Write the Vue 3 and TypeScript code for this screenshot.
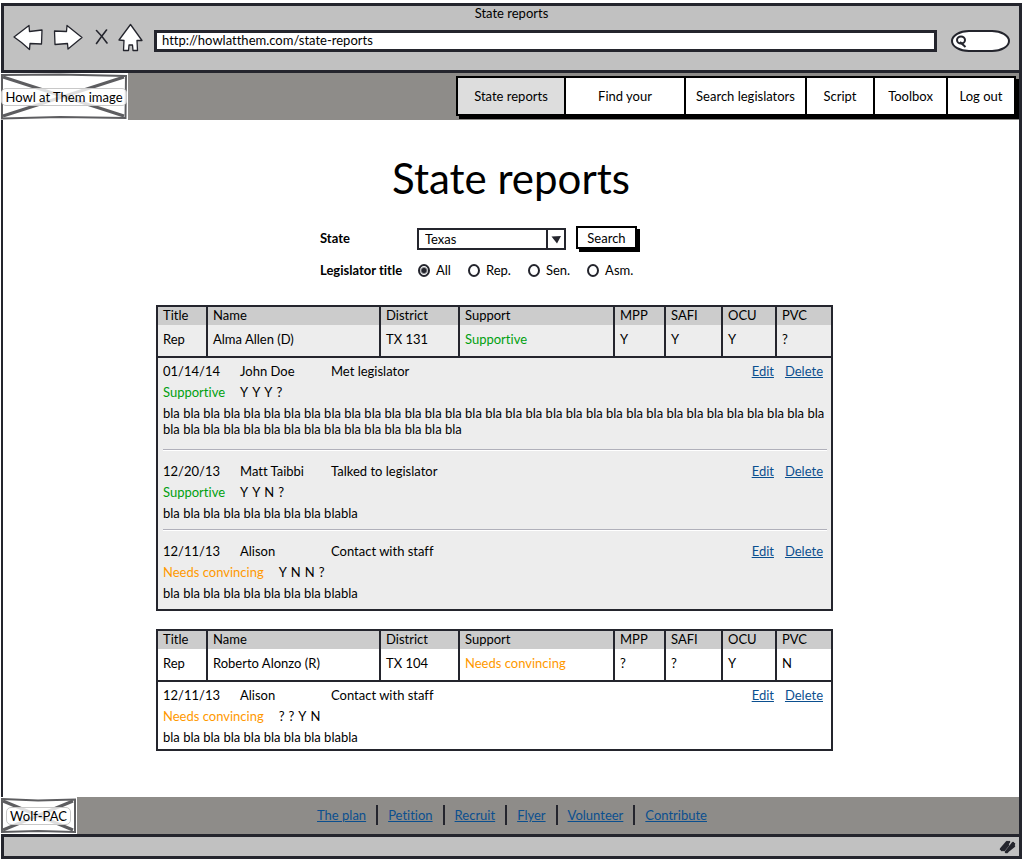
<script setup lang="ts">
import { ref } from 'vue'

type Stance = 'Supportive' | 'Needs convincing'

interface Entry {
  date: string
  author: string
  action: string
  stance: Stance
  answers: string[]
  note: string
}

interface Report {
  name: string
  district: string
  stance: Stance
  votes: string[]
  shaded: boolean
  entries: Entry[]
}

const navItems = [
  { label: 'State reports', size: 'w-state' },
  { label: 'Find your', size: 'w-find' },
  { label: 'Search legislators', size: 'w-search' },
  { label: 'Script', size: 'w-script' },
  { label: 'Toolbox', size: 'w-tool' },
  { label: 'Log out', size: 'w-log' },
]

const titles = ['All', 'Rep.', 'Sen.', 'Asm.']
const issues = ['MPP', 'SAFI', 'OCU', 'PVC']
const footerLinks = ['The plan', 'Petition', 'Recruit', 'Flyer', 'Volunteer', 'Contribute']

const bla = (n: number) => Array(n).fill('bla').join(' ')
const shortNote = bla(8) + ' blabla'

const reports: Report[] = [
  {
    name: 'Alma Allen (D)',
    district: 'TX 131',
    stance: 'Supportive',
    votes: ['Y', 'Y', 'Y', '?'],
    shaded: true,
    entries: [
      { date: '01/14/14', author: 'John Doe', action: 'Met legislator', stance: 'Supportive', answers: ['Y', 'Y', 'Y', '?'], note: bla(48) },
      { date: '12/20/13', author: 'Matt Taibbi', action: 'Talked to legislator', stance: 'Supportive', answers: ['Y', 'Y', 'N', '?'], note: shortNote },
      { date: '12/11/13', author: 'Alison', action: 'Contact with staff', stance: 'Needs convincing', answers: ['Y', 'N', 'N', '?'], note: shortNote },
    ],
  },
  {
    name: 'Roberto Alonzo (R)',
    district: 'TX 104',
    stance: 'Needs convincing',
    votes: ['?', '?', 'Y', 'N'],
    shaded: false,
    entries: [
      { date: '12/11/13', author: 'Alison', action: 'Contact with staff', stance: 'Needs convincing', answers: ['?', '?', 'Y', 'N'], note: shortNote },
    ],
  },
]

const url = ref('http://howlatthem.com/state-reports')
const quick = ref('')
const state = ref('Texas')
const legislatorTitle = ref('All')

const stanceClass = (s: Stance) => (s === 'Supportive' ? 'good' : 'warn')
</script>

<template>
  <div class="window">
    <div class="chrome">
      <div class="window-title">State reports</div>
      <div class="toolbar">
        <button class="tool" aria-label="Back">
          <svg width="30" height="27" viewBox="0 0 30 27"><path d="M1 13 L16 1.5 L16.5 7.500 L29 6 L28.500 20 L17 19.500 L16.500 25.500 L8.500 18.500 Z" /></svg>
        </button>
        <button class="tool" aria-label="Forward">
          <svg width="30" height="27" viewBox="0 0 30 27"><path d="M1.500 7 L13.500 7.500 L14 1.500 L29 13.500 L15 25 L14.500 19.500 L2 20.500 Z" /></svg>
        </button>
        <button class="tool stop" aria-label="Stop">
          <svg width="13" height="16" viewBox="0 0 13 16"><path class="stroke" d="M1.500 1.500 Q7 7 12 14 M11.500 1 Q6 8 1.500 14.500" /></svg>
        </button>
        <button class="tool" aria-label="Home">
          <svg width="25" height="29" viewBox="0 0 25 29"><path d="M12.500 1.500 L24 17.500 L19 17.500 L19.500 27.500 L15 27.500 L14.500 22 L11 22 L10.500 27.500 L5.500 27.500 L6 17.500 L1 17 Z" /></svg>
        </button>
        <input v-model="url" class="address" type="text" aria-label="Address" />
        <label class="quick">
          <svg width="12" height="14" viewBox="0 0 12 14"><ellipse cx="6" cy="6" rx="4" ry="3.500" /><path d="M5 8 L10.500 13" /></svg>
          <input v-model="quick" type="text" aria-label="Quick search" />
        </label>
      </div>
    </div>

    <header class="site-header">
      <div class="placeholder logo">
        <svg viewBox="0 0 128 47" preserveAspectRatio="none" aria-hidden="true"><path d="M2 2 L60 1.500 L126 3 L125.500 45 L60 44 L2 45.500 Z" /><path class="cross" d="M3 4 L124 43 M124 4 L3 43" /></svg>
        <span>Howl at Them image</span>
      </div>
      <nav class="nav">
        <button v-for="(item, i) in navItems" :key="item.label" :class="[item.size, { active: i === 0 }]">{{ item.label }}</button>
      </nav>
    </header>

    <main class="content">
      <h1>State reports</h1>
      <div class="column">
        <form class="filters" @submit.prevent>
          <label class="caption" for="state">State</label>
          <div class="line">
            <div class="select">
              <select id="state" v-model="state">
                <option>Texas</option>
              </select>
              <svg width="18" height="18" viewBox="0 0 16 18" aria-hidden="true"><path d="M3.500 6.500 L13 6 L9 13.500 Z" /></svg>
            </div>
            <button class="search" type="submit">Search</button>
          </div>
          <span id="legislator-title" class="caption">Legislator title</span>
          <div class="radios" role="radiogroup" aria-labelledby="legislator-title">
            <label v-for="t in titles" :key="t">
              <input v-model="legislatorTitle" type="radio" name="legislator-title" :value="t" />{{ t }}
            </label>
          </div>
        </form>

        <section v-for="r in reports" :key="r.name" class="report" :class="{ shaded: r.shaded }">
          <table>
            <colgroup>
              <col class="c-title" /><col class="c-name" /><col class="c-district" /><col class="c-support" />
              <col class="c-mpp" /><col class="c-safi" /><col class="c-ocu" /><col class="c-pvc" />
            </colgroup>
            <thead>
              <tr>
                <th>Title</th><th>Name</th><th>District</th><th>Support</th>
                <th v-for="i in issues" :key="i">{{ i }}</th>
              </tr>
            </thead>
            <tbody>
              <tr>
                <td>Rep</td><td>{{ r.name }}</td><td>{{ r.district }}</td>
                <td :class="stanceClass(r.stance)">{{ r.stance }}</td>
                <td v-for="(v, i) in r.votes" :key="i">{{ v }}</td>
              </tr>
            </tbody>
          </table>
          <div class="entries">
            <article v-for="(e, i) in r.entries" :key="i" class="entry">
              <div class="meta">
                <span>{{ e.date }}</span><span>{{ e.author }}</span><span>{{ e.action }}</span>
                <span class="actions"><a href="#">Edit</a><a href="#">Delete</a></span>
              </div>
              <div class="verdict">
                <span :class="stanceClass(e.stance)">{{ e.stance }}</span>
                <span class="answers"><span v-for="(a, k) in e.answers" :key="k">{{ a }}</span></span>
              </div>
              <p>{{ e.note }}</p>
            </article>
          </div>
        </section>
      </div>
    </main>

    <footer class="site-footer">
      <div class="placeholder sponsor">
        <svg viewBox="0 0 77 37" preserveAspectRatio="none" aria-hidden="true"><path d="M2 2 L38 3.500 L75 2.500 L75 35 L38 34 L2 35 Z" /><path class="cross" d="M3 4 L73 33 M73 4 L3 33" /></svg>
        <span>Wolf-PAC</span>
      </div>
      <nav class="footer-nav">
        <a v-for="l in footerLinks" :key="l" href="#">{{ l }}</a>
      </nav>
    </footer>

    <div class="status">
      <svg width="17" height="15" viewBox="0 0 17 15" aria-hidden="true"><path d="M2 10 L8 3 M3 11 L10 3 M5 11 L9 6 M7 13 L14 4 M8 13 L15 5 M10 11 L15 7" /></svg>
    </div>
  </div>
</template>

<style>
body {
  margin: 0;
  background: #fff;
}
</style>

<style scoped>
* {
  box-sizing: border-box;
}
.window {
  --ink: #24252d;
  --bar: #8e8c89;
  --metal: #c1c1c1;
  display: flex;
  flex-direction: column;
  min-height: 100vh;
  padding: 3px 0 2px;
  font: 13px/16px Lato, "Liberation Sans", sans-serif;
  font-variant-ligatures: none;
  color: #000;
}
button,
input,
select {
  font: inherit;
  font-variant-ligatures: none;
  color: inherit;
}
a {
  color: #0b4f8f;
}
.chrome {
  margin: 0 2px 0 1px;
  height: 70px;
  border: 3px solid var(--ink);
  background: var(--metal);
}
.window-title {
  text-align: center;
  line-height: 15px;
}
.toolbar {
  display: flex;
  align-items: center;
  gap: 10px;
  height: 32px;
  padding: 0 9px;
}
.tool {
  flex: none;
  display: flex;
  padding: 0;
  border: 0;
  background: none;
}
.tool path {
  fill: #fff;
  stroke: var(--ink);
  stroke-width: 1.3;
  stroke-linejoin: round;
}
.tool path.stroke {
  fill: none;
  stroke-width: 1.6;
  stroke-linecap: round;
}
.stop {
  margin-left: 2px;
}
.address {
  flex: 1;
  min-width: 0;
  height: 22px;
  margin: 8px 4px 0 1px;
  padding: 0 5px 2px;
  border: 3px solid var(--ink);
  background: #fff;
}
.quick {
  display: flex;
  align-items: center;
  width: 59px;
  height: 22px;
  margin-top: 8px;
  padding-left: 2px;
  border: 2px solid var(--ink);
  border-radius: 18px / 11px;
  background: #fff;
}
.quick svg {
  flex: none;
  fill: none;
  stroke: var(--ink);
  stroke-width: 2;
}
.quick input {
  width: 34px;
  padding: 0;
  border: 0;
  outline: 0;
  background: none;
}
.site-header,
.site-footer {
  display: flex;
  background: var(--bar);
  margin-right: 2px;
  border-right: 3px solid var(--ink);
}
.site-header {
  height: 47px;
  justify-content: space-between;
}
.placeholder {
  position: relative;
  display: flex;
  align-items: center;
  justify-content: center;
  background: #fff;
}
.placeholder svg {
  position: absolute;
  inset: 0;
  width: 100%;
  height: 100%;
  fill: none;
  stroke: #5d5d60;
  stroke-width: 2;
}
.placeholder .cross {
  stroke-width: 3;
}
.placeholder span {
  position: relative;
  padding: 0 3px;
  border: 1px solid #c8c8c8;
  border-radius: 5px;
  background: rgba(255, 255, 255, 0.8);
  white-space: nowrap;
}
.logo {
  width: 128px;
}
.sponsor {
  width: 77px;
}
.nav {
  display: flex;
  margin: 3px 3px 4px 0;
  box-shadow: 3px 3px 0 #000;
}
.nav button {
  padding: 0;
  border: 2px solid #000;
  border-right-width: 0;
  background: #fff;
}
.nav button:last-child {
  border-right-width: 2px;
}
.nav .active {
  background: #ddd;
}
.w-state {
  width: 108px;
}
.w-find {
  width: 120px;
}
.w-search {
  width: 121px;
}
.w-script {
  width: 68px;
}
.w-tool {
  width: 73px;
}
.w-log {
  width: 70px;
}
.content {
  flex: 1;
  margin: 0 2px 0 1px;
  padding-bottom: 20px;
  border: 0 solid var(--ink);
  border-width: 0 3px 0 2px;
  background: #fff;
}
h1 {
  margin: 34px 0 0;
  font-size: 42px;
  line-height: 48px;
  font-weight: 400;
  text-align: center;
}
.column {
  max-width: 710px;
  margin: 0 auto;
  padding-right: 33px;
}
.filters {
  display: grid;
  grid-template-columns: 98px 1fr;
  align-items: center;
  row-gap: 12px;
  margin: 24px 0 27px;
  padding-left: 163px;
}
.caption {
  padding-left: 1px;
  font-weight: 700;
}
.line {
  display: flex;
  gap: 10px;
}
.select {
  display: flex;
  align-items: center;
  position: relative;
  width: 149px;
  height: 22px;
  margin-top: 2px;
}
.select select {
  width: 100%;
  height: 100%;
  padding: 0 22px 0 6px;
  border: 2px solid var(--ink);
  border-radius: 0;
  background: #fff;
  appearance: none;
}
.select svg {
  position: absolute;
  right: 2px;
  top: 2px;
  border-left: 2px solid var(--ink);
  fill: var(--ink);
  pointer-events: none;
}
.search {
  width: 61px;
  height: 23px;
  padding: 0;
  border: 2px solid #000;
  background: #fff;
  box-shadow: 3px 3px 0 #000;
}
.radios {
  display: flex;
  gap: 17px;
  padding-left: 1px;
}
.radios label {
  display: flex;
  align-items: center;
  gap: 6px;
}
.radios input {
  appearance: none;
  width: 12px;
  height: 13px;
  margin: 0;
  border: 2px solid var(--ink);
  border-radius: 50%;
  background: #fff;
}
.radios input:checked {
  background: radial-gradient(circle, var(--ink) 2px, #fff 4px);
}
.report {
  margin-bottom: 18px;
  background: #fff;
}
.shaded {
  background: #ededed;
}
table {
  width: 100%;
  table-layout: fixed;
  border-collapse: separate;
  border-spacing: 0;
  border: 2px solid var(--ink);
  border-bottom: 0;
}
th,
td {
  padding: 0 5px;
  border-left: 2px solid var(--ink);
  text-align: left;
  font-weight: 400;
  white-space: nowrap;
}
th:first-child,
td:first-child {
  border-left: 0;
}
th {
  height: 18px;
  padding-bottom: 2px;
  background: #ccc;
}
td {
  height: 31px;
  padding-bottom: 3px;
}
.c-title {
  width: 48px;
}
.c-name {
  width: 173px;
}
.c-district {
  width: 79px;
}
.c-support {
  width: 155px;
}
.c-mpp {
  width: 51px;
}
.c-safi {
  width: 57px;
}
.c-ocu {
  width: 54px;
}
.good {
  color: #00a010;
}
.warn {
  color: #ff9900;
}
.entries {
  padding: 0 4px 0 5px;
  border: 2px solid var(--ink);
}
.entry {
  padding: 12px 0 8px;
}
.entry:first-child {
  padding: 5px 0 12px;
}
.entry:only-child {
  padding-bottom: 4px;
}
.entry + .entry {
  border-top: 1px solid #b0b0ba;
  box-shadow: inset 0 1px 0 #fff;
  padding-top: 13px;
}
.meta {
  display: grid;
  grid-template-columns: 77px 91px 1fr auto;
}
.actions {
  display: flex;
  gap: 11px;
  padding-right: 4px;
}
.verdict {
  display: flex;
  gap: 15px;
  margin: 5px 0;
}
.answers {
  display: flex;
  gap: 4px;
}
p {
  margin: 0;
}
.site-footer {
  height: 37px;
}
.footer-nav {
  flex: 1;
  display: flex;
  align-items: center;
  justify-content: center;
  padding: 0 72px 2px 0;
}
.footer-nav a {
  padding: 0 10px;
  line-height: 20px;
}
.footer-nav a + a {
  border-left: 2px solid var(--ink);
}
.status {
  display: flex;
  justify-content: flex-end;
  align-items: center;
  height: 25px;
  margin: 0 2px 0 1px;
  padding-right: 3px;
  border: 3px solid var(--ink);
  background: var(--metal);
}
.status svg {
  fill: none;
  stroke: var(--ink);
  stroke-width: 2.500;
  stroke-linecap: round;
}
</style>
